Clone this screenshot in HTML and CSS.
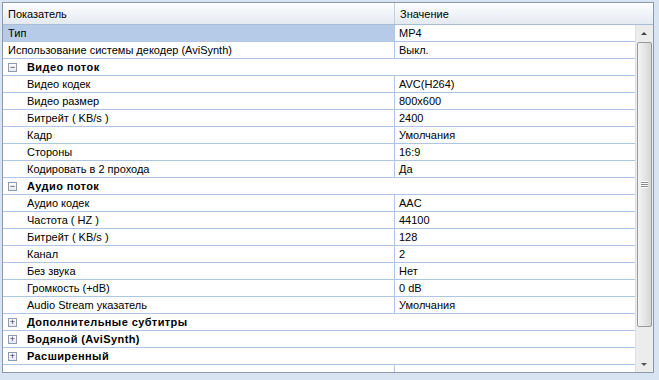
FILE: index.html
```html
<!DOCTYPE html>
<html lang="ru">
<head>
    <meta charset="UTF-8">
    <title>Параметры</title>
    <link rel="stylesheet" href="styles.css">
</head>
<body>
    <div class="grid">
        <!-- Header -->
        <div class="header">
            <div class="col-name">Показатель</div>
            <div class="col-value">Значение</div>
        </div>

        <div class="body">
            <div class="rows">
                <div class="row selected"><div class="name">Тип</div><div class="value">MP4</div></div>
                <div class="row"><div class="name">Использование системы декодер (AviSynth)</div><div class="value">Выкл.</div></div>

                <div class="row group"><span class="toggle">&minus;</span>Видео поток</div>
                <div class="row child"><div class="name">Видео кодек</div><div class="value">AVC(H264)</div></div>
                <div class="row child"><div class="name">Видео размер</div><div class="value">800x600</div></div>
                <div class="row child"><div class="name">Битрейт ( KB/s )</div><div class="value">2400</div></div>
                <div class="row child"><div class="name">Кадр</div><div class="value">Умолчания</div></div>
                <div class="row child"><div class="name">Стороны</div><div class="value">16:9</div></div>
                <div class="row child"><div class="name">Кодировать в 2 прохода</div><div class="value">Да</div></div>

                <div class="row group"><span class="toggle">&minus;</span>Аудио поток</div>
                <div class="row child"><div class="name">Аудио кодек</div><div class="value">AAC</div></div>
                <div class="row child"><div class="name">Частота ( HZ )</div><div class="value">44100</div></div>
                <div class="row child"><div class="name">Битрейт ( KB/s )</div><div class="value">128</div></div>
                <div class="row child"><div class="name">Канал</div><div class="value">2</div></div>
                <div class="row child"><div class="name">Без звука</div><div class="value">Нет</div></div>
                <div class="row child"><div class="name">Громкость (+dB)</div><div class="value">0 dB</div></div>
                <div class="row child"><div class="name">Audio Stream указатель</div><div class="value">Умолчания</div></div>

                <div class="row group"><span class="toggle">+</span>Дополнительные субтитры</div>
                <div class="row group"><span class="toggle">+</span>Водяной (AviSynth)</div>
                <div class="row group"><span class="toggle">+</span>Расширенный</div>
                <div class="row empty"><div class="name"></div><div class="value"></div></div>
            </div>

            <!-- Scrollbar -->
            <div class="scrollbar">
                <div class="arrow up"></div>
                <div class="track">
                    <div class="thumb"><span class="grip"></span></div>
                </div>
                <div class="arrow down"></div>
            </div>
        </div>
    </div>
</body>
</html>
```

FILE: styles.css
```css
body {
    margin: 0;
    background-color: #d9e4f2;
    font-family: "Liberation Sans", Arial, sans-serif;
    font-size: 11px;
    color: #000;
}

.grid {
    margin: 2px 0 0 2px;
    width: 650px;
    height: 369px;
    border: 1px solid #8c99a8;
    background-color: #fff;
    display: flex;
    flex-direction: column;
    overflow: hidden;
}

.header {
    display: flex;
    height: 21px;
    flex-shrink: 0;
    background: linear-gradient(#fdfdfe, #e4eaf2);
    border-bottom: 1px solid #a9bdd6;
}

.header div {
    line-height: 22px;
    padding-left: 5px;
}

.col-name {
    width: 386px;
    border-right: 1px solid #c3cfdd;
}

.col-value {
    flex: 1;
}

.body {
    flex: 1;
    display: flex;
    min-height: 0;
}

.rows {
    flex: 1;
    overflow: hidden;
}

.row {
    display: flex;
    height: 16px;
    line-height: 16px;
    border-bottom: 1px solid #adc6e6;
}

.row .name {
    width: 386px;
    padding-left: 5px;
    border-right: 1px solid #adc6e6;
    white-space: nowrap;
    overflow: hidden;
}

.row .value {
    flex: 1;
    padding-left: 4px;
}

.row.selected {
    background-color: #b5cbe8;
}

.row.selected .value {
    background-color: #fff;
}

.row.child .name {
    padding-left: 24px;
    width: 367px;
}

.row.group {
    font-weight: bold;
    letter-spacing: 0.4px;
    align-items: center;
    padding-left: 5px;
}

.toggle {
    width: 7px;
    height: 7px;
    border: 1px solid #8f9dab;
    background: linear-gradient(#fff, #e6e9ee);
    margin-right: 10px;
    font-weight: normal;
    letter-spacing: 0;
    font-size: 9px;
    line-height: 7px;
    text-align: center;
    color: #333;
}

.scrollbar {
    width: 17px;
    display: flex;
    flex-direction: column;
    background-color: #ececec;
    border-left: 1px solid #e0e0e0;
}

.arrow {
    height: 17px;
    position: relative;
}

.arrow::after {
    content: "";
    position: absolute;
    left: 5px;
    border-left: 3px solid transparent;
    border-right: 3px solid transparent;
}

.arrow.up::after {
    top: 7px;
    border-bottom: 3px solid #444;
}

.arrow.down::after {
    top: 8px;
    border-top: 3px solid #555;
}

.track {
    flex: 1;
    padding: 0 0 30px 0;
}

.thumb {
    height: 100%;
    margin: 0 1px;
    border: 1px solid #999;
    border-radius: 2px;
    background: linear-gradient(90deg, #f4f4f4, #e2e2e2 60%, #d6d6d6);
    display: flex;
    align-items: center;
    justify-content: center;
}

.grip {
    width: 7px;
    height: 7px;
    background: repeating-linear-gradient(#fff 0 1px, #8a8a8a 1px 2px);
}
```
